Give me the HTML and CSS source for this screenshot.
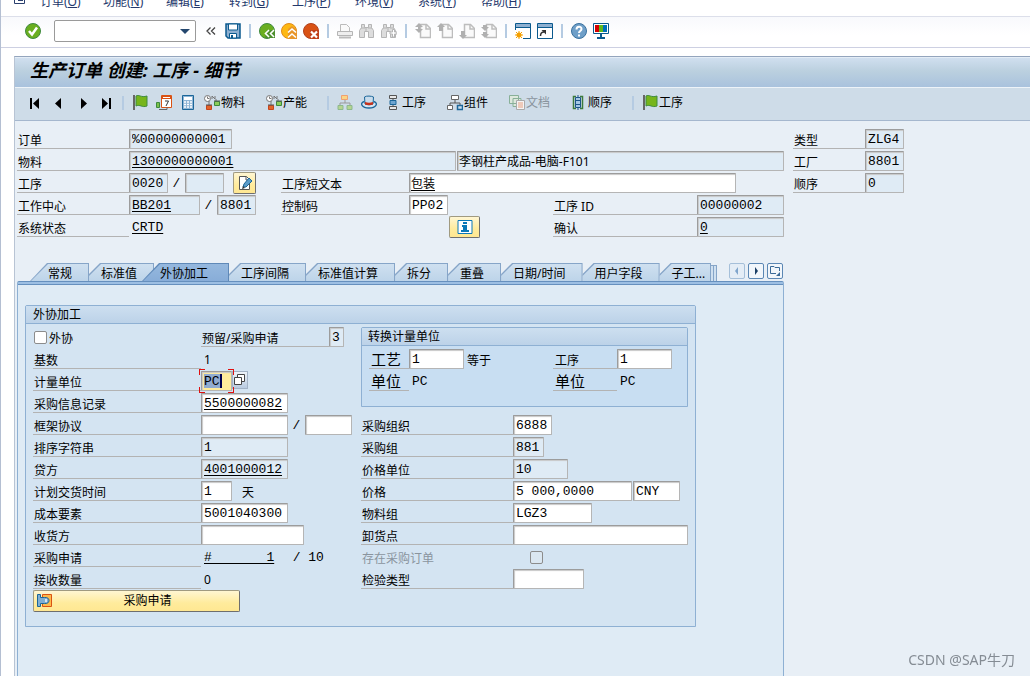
FILE: index.html
```
<!DOCTYPE html>
<html lang="zh-CN">
    <head>
        <meta charset="UTF-8" />
        <meta name="viewport" content="width=device-width, initial-scale=1.0" />
        <title>生产订单 创建: 工序 - 细节</title>
        <link rel="stylesheet" href="styles.css">
    </head>
    <body>
        <svg class="sprite" aria-hidden="true">
            <symbol id="i-flag" viewBox="0 0 16 16">
                <path d="M1 0h2v15H1z" fill="#666" />
                <path d="M4 1c3-2 5 2 11 0v10c-5 2-7-2-11 0z" fill="#76b51b" stroke="#3f8a3f" />
            </symbol>
            <symbol id="i-clock-net" viewBox="0 0 16 16">
                <circle cx="3.500" cy="3.500" r="3" fill="#fff" stroke="#777" />
                <path d="M3.500 1.500v2h2M8 4V1l3 3V1M5 6v4M12 4v3" fill="none" stroke="#777" />
                <path d="M2.500 10.500h5v4h-5z" fill="#e0642a" stroke="#c8431a" />
                <path d="M10.500 6.500h5v4h-5z" fill="#8ccc5a" stroke="#3c8a3c" />
                <path d="M2 10h6M10 6h6" stroke="#555" />
            </symbol>
            <symbol id="i-page" viewBox="0 0 16 16">
                <path d="M5.500 1.500h6l4 4v9h-10z" fill="#fafafa" stroke="#bdbdbd" stroke-width="1.500" />
                <path d="M11 1v5h5" fill="none" stroke="#bdbdbd" stroke-width="1.500" />
            </symbol>
            <symbol id="i-glass" viewBox="0 0 16 16">
                <path d="M2.500 1.500h3v3h4v-3h3v3l2 3v7h-5v-6h-4v6h-5v-7l2-3z" fill="#ddd" stroke="#b5b5b5" />
                <path d="M2 5h4M9 5h4M7 5v4" stroke="#b5b5b5" />
            </symbol>
        </svg>

        <ul class="menubar">
            <li class="menu-icon">
                <svg width="14" height="12" viewBox="0 0 14 12"><path d="M1.500 0v8.500h10V5M5 5.500h5" fill="none" stroke="#2a3f6e" /></svg>
            </li>
            <li><a href="#">订单(<u>O</u>)</a></li>
            <li><a href="#">功能(<u>N</u>)</a></li>
            <li><a href="#">编辑(<u>E</u>)</a></li>
            <li><a href="#">转到(<u>G</u>)</a></li>
            <li><a href="#">工序(<u>P</u>)</a></li>
            <li><a href="#">环境(<u>V</u>)</a></li>
            <li><a href="#">系统(<u>Y</u>)</a></li>
            <li><a href="#">帮助(<u>H</u>)</a></li>
        </ul>

        <div class="toolbar">
            <button class="tool" title="Enter">
                <svg viewBox="0 0 16 16"><circle cx="8" cy="8" r="7.500" fill="#6aae20" stroke="#3f8a3f" /><path d="M4 8l3 3.500L12 4.500" fill="none" stroke="#fff" stroke-width="2.500" /></svg>
            </button>
            <div class="command">
                <select aria-label="命令"><option></option></select>
            </div>
            <button class="tool narrow" title="收起">
                <svg viewBox="0 0 10 16"><path d="M4.500 4.500L1 8l3.500 3.500M9 4.500L5.500 8 9 11.500" fill="none" stroke="#444" stroke-width="1.300" /></svg>
            </button>
            <button class="tool" title="保存">
                <svg viewBox="0 0 16 16"><path d="M1 1h14v14H3l-2-2z" fill="#8fb0d0" stroke="#0b5a8e" stroke-width="1.500" /><path d="M3.500 1h9v6h-9z" fill="#fff" stroke="#0b5a8e" /><path d="M4.500 10.500h7V15h-7z" fill="#fff" stroke="#0b5a8e" /><path d="M6 12h2v3H6z" fill="#0b5a8e" /></svg>
            </button>
            <span class="sep"></span>
            <button class="tool" title="返回">
                <svg viewBox="0 0 16 16"><circle cx="8" cy="8" r="7.500" fill="#6aae20" stroke="#3f8a3f" /><path d="M8 7h8v8H6z" fill="#4d8f2e" /><path d="M10 7l-3.500 3.500L10 14M15 7l-3.500 3.500L15 14" fill="none" stroke="#fff" stroke-width="1.600" /></svg>
            </button>
            <button class="tool" title="退出">
                <svg viewBox="0 0 16 16"><circle cx="8" cy="8" r="7.500" fill="#fdb813" stroke="#e08a1a" /><path d="M7 6l4-3 5 4v9H7z" fill="#e8962a" /><path d="M7 9.500L11 6l4 3.500M7 14.500L11 11l4 3.500" fill="none" stroke="#fff" stroke-width="1.600" /></svg>
            </button>
            <button class="tool" title="取消">
                <svg viewBox="0 0 16 16"><circle cx="8" cy="8" r="7.500" fill="#d95214" stroke="#b0401c" /><path d="M7 7h9v9H7z" fill="#c0401a" /><path d="M8 8.500l6 6M14 8.500l-6 6" stroke="#fff" stroke-width="2.200" /></svg>
            </button>
            <span class="sep"></span>
            <button class="tool" title="打印" disabled>
                <svg viewBox="0 0 16 16"><path d="M3.500 8V1.500h6l3 3V8" fill="#fafafa" stroke="#bbb" /><path d="M.5 8.500h15v4H.5z" fill="#eee" stroke="#b5b5b5" /><path d="M2 14.500h12" stroke="#bbb" stroke-width="2" /></svg>
            </button>
            <button class="tool" title="查找" disabled><svg><use href="#i-glass" /></svg></button>
            <button class="tool" title="继续查找" disabled>
                <svg viewBox="0 0 16 16"><use href="#i-glass" /><path d="M9 9h2.500V6.500h2V9H16v2h-2.500v3h-2v-3H9z" fill="#fff" stroke="#b5b5b5" /></svg>
            </button>
            <span class="sep"></span>
            <button class="tool" title="首页" disabled>
                <svg viewBox="0 0 16 16"><use href="#i-page" /><path d="M4 0l4 4H5v2h3l-4 4-4-4h3V4H0z" fill="#b0b0b0" /></svg>
            </button>
            <button class="tool" title="上一页" disabled>
                <svg viewBox="0 0 16 16"><use href="#i-page" /><path d="M4 0l4 4H6v4H2V4H0z" fill="#b0b0b0" /></svg>
            </button>
            <button class="tool" title="下一页" disabled>
                <svg viewBox="0 0 16 16"><use href="#i-page" /><path d="M4 16l4-4H6V8H2v4H0z" fill="#b0b0b0" /></svg>
            </button>
            <button class="tool" title="末页" disabled>
                <svg viewBox="0 0 16 16"><use href="#i-page" /><path d="M2 2h4v2h2L4 8 0 4h2zM2 9h4v2h2l-4 4-4-4h2z" fill="#b0b0b0" /></svg>
            </button>
            <span class="sep"></span>
            <button class="tool" title="新建会话">
                <svg viewBox="0 0 16 16"><path d="M.5.5h15v15H.5z" fill="#fff" stroke="#0b5a8e" /><path d="M1 1h14v3H1z" fill="#8fb0d0" /><path d="M1 4.500h14" stroke="#0b5a8e" /><path d="M0 7h8v9H0z" fill="#fff" /><circle cx="4" cy="12" r="2.500" fill="#f5a000" /><path d="M4 8v8M0 12h8M1 9l6 6M7 9l-6 6" stroke="#f5a000" /></svg>
            </button>
            <button class="tool" title="创建快捷方式">
                <svg viewBox="0 0 16 16"><path d="M.5.5h15v15H.5z" fill="#fff" stroke="#0b5a8e" /><path d="M1 1h14v3H1z" fill="#8fb0d0" /><path d="M1 4.500h14" stroke="#0b5a8e" /><path d="M3.500 13c0-3 1-4 3.500-4" fill="none" stroke="#333" stroke-width="1.500" /><path d="M4.500 7H9v4.500z" fill="#333" /></svg>
            </button>
            <span class="sep"></span>
            <button class="tool" title="帮助">
                <svg viewBox="0 0 16 16"><circle cx="8" cy="8" r="7.500" fill="#6f9fc8" stroke="#3a719f" /><path d="M5.500 6.500C5.500 3 10.500 3 10.500 6c0 2-2.500 2-2.500 4M8 11.500v2" fill="none" stroke="#fff" stroke-width="2" /></svg>
            </button>
            <button class="tool" title="定制本地布局">
                <svg viewBox="0 0 16 16"><path d="M.5.5h15v10H.5z" fill="#fff" stroke="#0b5a8e" /><path d="M2 2h4v7H2z" fill="#d40000" /><path d="M6 2h4v7H6z" fill="#5fb81e" /><path d="M10 2h4v7h-4z" fill="#0070b8" /><path d="M7 11h2v3h3v2H4v-2h3z" fill="#0b5a8e" /></svg>
            </button>
        </div>

        <main class="screen">
            <h1 class="title">生产订单 创建: 工序 - 细节</h1>

            <div class="app-toolbar">
                <button class="app-btn" title="第一个"><svg viewBox="0 0 16 16"><path d="M4 3v11" stroke="#000" stroke-width="2" /><path d="M12 3v11L6 8.500z" /></svg></button>
                <button class="app-btn" title="上一个"><svg viewBox="0 0 16 16"><path d="M10 3v11L4 8.500z" /></svg></button>
                <button class="app-btn" title="下一个"><svg viewBox="0 0 16 16"><path d="M6 3v11l6-5.500z" /></svg></button>
                <button class="app-btn" title="最后一个"><svg viewBox="0 0 16 16"><path d="M3 3v11l6-5.500z" /><path d="M11 3v11" stroke="#000" stroke-width="2" /></svg></button>
                <span class="sep"></span>
                <button class="app-btn" title="下达"><svg><use href="#i-flag" /></svg></button>
                <button class="app-btn" title="计划">
                    <svg viewBox="0 0 16 16"><path d="M5.500.5h10v12h-10z" fill="#fff" stroke="#d95214" /><path d="M5 1h11v3H5z" fill="#d95214" /><path d="M7 2h7v1H7z" fill="#fff" /><path d="M9 6h3.500L10 11" fill="none" stroke="#333" /><path d="M.5 7.500h3v5h-3z" fill="#7cc04a" stroke="#3c8a3c" /><path d="M3 14.500h8V12" fill="none" stroke="#666" /></svg>
                </button>
                <button class="app-btn" title="成本">
                    <svg viewBox="0 0 16 16"><path d="M2.500.5h11v14h-11z" fill="#8fb5d5" stroke="#1b6699" /><path d="M4 2h8v3H4z" fill="#fff" /><path d="M4 7h8M4 9.500h8M4 12h8" stroke="#fff" stroke-dasharray="2 1" stroke-width="1.500" /></svg>
                </button>
                <button class="app-btn text"><svg><use href="#i-clock-net" /></svg>物料</button>
                <button class="app-btn text"><svg><use href="#i-clock-net" /></svg>产能</button>
                <span class="sep"></span>
                <button class="app-btn" title="层次" disabled>
                    <svg viewBox="0 0 16 16"><path d="M8 5v3M3 10V8h10v2" fill="none" stroke="#999" /><path d="M4.500.5h6v4h-6z" fill="#fbd585" stroke="#f0a070" /><path d="M1 10.500h5v4H1zM10 10.500h5v4h-5z" fill="#b5d590" stroke="#8cb88c" /></svg>
                </button>
                <button class="app-btn" title="抬头">
                    <svg viewBox="0 0 16 16"><path d="M3.500 6.500C-2 8 1 13 8 13s10-5 4.500-6.500" fill="#d5e5f2" stroke="#1b6699" stroke-width="1.300" /><path d="M4 9l-.5-7c2-1.500 7-1 9 0L12 9c-3 1-5 1-8 0z" fill="#c8dcec" stroke="#1b6699" /><path d="M4 7c3 1 5 1 8 0v2.500c-3 1-5 1-8 0z" fill="#c8321a" /></svg>
                </button>
                <button class="app-btn text">
                    <svg viewBox="0 0 16 16"><path d="M4.500.5h7v3h-7zM4.500 11.500h7v3h-7z" fill="#e8e8e8" stroke="#555" /><path d="M8 4v8" stroke="#555" /><path d="M5 5.500h6v4H5z" fill="#6fa5d0" stroke="#1b6699" /></svg>工序
                </button>
                <button class="app-btn text">
                    <svg viewBox="0 0 16 16"><path d="M8 5v3M3 10V8h10v2" fill="none" stroke="#555" /><path d="M4.500.5h7v4h-7zM.5 10.500h5v4h-5z" fill="#fff" stroke="#666" /><path d="M10.500 10.500h5v4h-5z" fill="#c8dcec" stroke="#1b6699" stroke-width="1.500" /></svg>组件
                </button>
                <button class="app-btn text" disabled>
                    <svg viewBox="0 0 16 16"><path d="M.5.5h9v8h-9zM4 3.500h8v8H4z" fill="#dde8dd" stroke="#88b098" /><path d="M7.500 5.500h8v9h-8z" fill="#f4f4f4" stroke="#aaa" /><path d="M9 8h5M9 10h5M9 12h5" stroke="#e8a080" /></svg>文档
                </button>
                <button class="app-btn text">
                    <svg viewBox="0 0 16 16"><path d="M5 1.500H2.500v12H5M9 1.500h2.500v12H9" fill="none" stroke="#3c7a3c" stroke-width="1.500" /><path d="M4.500 2.500h5v10h-5z" fill="#a5c8e5" stroke="#1b5588" /><path d="M4 5.500h6M4 9.500h6M7 0v2M7 13v2" stroke="#1b5588" /></svg>顺序
                </button>
                <span class="sep"></span>
                <button class="app-btn text"><svg><use href="#i-flag" /></svg>工序</button>
            </div>

            <div class="content">
                <div class="order-head">
                    <div class="head-main">
                        <label for="order">订单</label>
                        <div class="cell wide"><input class="c12" id="order" value="%00000000001" readonly /></div>

                        <label for="material">物料</label>
                        <div class="cell wide tight">
                            <input class="c40 linked" id="material" value="1300000000001" readonly />
                            <input class="c40 cjk" aria-label="物料描述" value="李钢柱产成品-电脑-F101" readonly />
                        </div>

                        <label for="operation">工序</label>
                        <div class="cell">
                            <input class="c4" id="operation" value="0020" readonly />
                            <span class="slash">/</span>
                            <input class="c4" aria-label="子工序" readonly />
                            <button class="yellow edit" title="长文本">
                                <svg viewBox="0 0 16 16"><path d="M2.500 1.500h7l3 3v10h-10z" fill="#fff" stroke="#555" /><path d="M9 2v3h4" fill="none" stroke="#555" /><path d="M6 12l1-3 5-6 3 3-6 6z" fill="#5b9bc8" stroke="#1b6699" /><path d="M5 14l1-3 2 2z" fill="#333" /></svg>
                            </button>
                        </div>
                        <label for="short-text">工序短文本</label>
                        <div class="cell rest"><input class="c40 cjk linked" id="short-text" value="包装" /></div>

                        <label for="work-center">工作中心</label>
                        <div class="cell">
                            <input class="c8 linked" id="work-center" value="BB201" readonly />
                            <span class="slash">/</span>
                            <input class="c4" aria-label="工厂" value="8801" readonly />
                        </div>
                        <label for="control-key">控制码</label>
                        <div class="cell"><input class="c4" id="control-key" value="PP02" /></div>
                        <label for="operation-id">工序 ID</label>
                        <div class="cell"><input class="c10" id="operation-id" value="00000002" readonly /></div>

                        <span class="label">系统状态</span>
                        <div class="cell status"><a class="output" href="#">CRTD</a></div>
                        <div class="cell info-cell">
                            <button class="yellow info" title="状态">
                                <svg viewBox="0 0 16 16"><path d="M1 1.500h14v13H1z" fill="#fff" stroke="#0b78b8" /><path d="M6 3h4v2H6zM5 6h5v5h2v2H4v-2h2V8H5z" fill="#0b78b8" /></svg>
                            </button>
                        </div>
                        <label for="confirmation">确认</label>
                        <div class="cell"><input class="c10 linked" id="confirmation" value="0" readonly /></div>
                    </div>

                    <div class="head-side">
                        <label for="order-type">类型</label>
                        <input class="c4" id="order-type" value="ZLG4" readonly />
                        <label for="plant">工厂</label>
                        <input class="c4" id="plant" value="8801" readonly />
                        <label for="sequence">顺序</label>
                        <input class="c4" id="sequence" value="0" readonly />
                    </div>
                </div>

                <div class="tabstrip">
                    <div class="tabs" role="tablist">
                        <button class="tab" role="tab">常规</button>
                        <button class="tab" role="tab">标准值</button>
                        <button class="tab active" role="tab" aria-selected="true">外协加工</button>
                        <button class="tab" role="tab">工序间隔</button>
                        <button class="tab" role="tab">标准值计算</button>
                        <button class="tab" role="tab">拆分</button>
                        <button class="tab" role="tab">重叠</button>
                        <button class="tab" role="tab">日期/时间</button>
                        <button class="tab" role="tab">用户字段</button>
                        <button class="tab last" role="tab">子工...</button>
                        <span class="tab-edge"></span>
                        <span class="tab-edge"></span>
                    </div>
                    <div class="tab-nav">
                        <button title="左" disabled><svg viewBox="0 0 14 14"><path d="M8 3v8L5 7z" fill="#7fa5cc" /></svg></button>
                        <button title="右"><svg viewBox="0 0 14 14"><path d="M6 3v8l3-4z" fill="#1b3f66" /></svg></button>
                        <button title="列表"><svg viewBox="0 0 14 14"><path d="M11.500 7V3.500H7L6 2.500H2.500v7H8" fill="none" stroke="#3a6a98" /><path d="M8 12h4V8z" fill="#3a6a98" /></svg></button>
                    </div>
                </div>

                <div class="panel">
                    <fieldset class="group">
                        <div class="group-title">外协加工</div>
                        <div class="group-body">
                            <div class="col-left">
                                <div class="row">
                                    <div class="check"><input type="checkbox" id="external" /><label for="external">外协</label></div>
                                    <label class="l16" for="reservation">预留/采购申请</label>
                                    <input class="c1" id="reservation" value="3" readonly />
                                </div>
                                <div class="row"><span class="label l21">基数</span><span class="output sans">1</span></div>
                                <div class="row">
                                    <label class="l21" for="unit">计量单位</label>
                                    <span class="focus-frame"><input class="c3 selected" id="unit" value="PC" /></span>
                                    <button class="match" title="搜索帮助">
                                        <svg viewBox="0 0 14 14"><path d="M4.500 1.500h7v7h-7z" fill="#fff" stroke="#444" /><path d="M1.500 4.500h7v7h-7z" fill="#fff" stroke="#444" /></svg>
                                    </button>
                                </div>
                                <div class="row"><label class="l21" for="info-record">采购信息记录</label><input class="c10 linked" id="info-record" value="5500000082" /></div>
                                <div class="row">
                                    <label class="l21" for="agreement">框架协议</label><input class="c10" id="agreement" />
                                    <span class="slash">/</span>
                                    <input class="c5" aria-label="协议项目" />
                                </div>
                                <div class="row"><label class="l21" for="sort">排序字符串</label><input class="c10" id="sort" value="1" readonly /></div>
                                <div class="row"><label class="l21" for="vendor">贷方</label><input class="c10 linked" id="vendor" value="4001000012" readonly /></div>
                                <div class="row"><label class="l21" for="delivery">计划交货时间</label><input class="c3" id="delivery" value="1" /><span class="unit">天</span></div>
                                <div class="row"><label class="l21" for="cost">成本要素</label><input class="c10" id="cost" value="5001040300" /></div>
                                <div class="row"><label class="l21" for="recipient">收货方</label><input class="c12" id="recipient" /></div>
                                <div class="row">
                                    <span class="label l21">采购申请</span>
                                    <a class="output" href="#">#       1</a>
                                    <span class="slash req">/</span>
                                    <span class="output">10</span>
                                </div>
                                <div class="row"><span class="label l21">接收数量</span><span class="output sans">0</span></div>
                                <button class="yellow requisition">
                                    <svg viewBox="0 0 16 16"><path d="M5.500 1.500h9v12h-9z" fill="#fdb94a" stroke="#d95214" /><path d="M.500 1.500h3v3h4c6-1 6 7 0 6h-4v3h-3z" fill="#7faed2" stroke="#1b6699" /><path d="M8 6h2v3H8z" fill="#d5e5f2" /></svg>
                                    <span>采购申请</span>
                                </button>
                            </div>

                            <div class="col-right">
                                <fieldset class="group inner">
                                    <div class="group-title">转换计量单位</div>
                                    <div class="convert">
                                        <label class="big" for="routing">工艺</label><input class="c6" id="routing" value="1" /><span class="equals">等于</span>
                                        <label for="op-qty">工序</label><input class="c6" id="op-qty" value="1" />
                                        <span class="label big">单位</span><span class="output">PC</span><span></span>
                                        <span class="label big">单位</span><span class="output">PC</span>
                                    </div>
                                </fieldset>
                                <div class="row"><label class="l19" for="org">采购组织</label><input class="c4" id="org" value="6888" /></div>
                                <div class="row"><label class="l19" for="purch-group">采购组</label><input class="c3" id="purch-group" value="881" readonly /></div>
                                <div class="row"><label class="l19" for="price-unit">价格单位</label><input class="c6" id="price-unit" value="10" readonly /></div>
                                <div class="row tight">
                                    <label class="l19" for="price">价格</label><input class="c14" id="price" value="5 000,0000" />
                                    <input class="c5" aria-label="货币" value="CNY" />
                                </div>
                                <div class="row"><label class="l19" for="mat-group">物料组</label><input class="c9" id="mat-group" value="LGZ3" /></div>
                                <div class="row"><label class="l19" for="unload">卸货点</label><input class="c21" id="unload" /></div>
                                <div class="row"><label class="l19 off" for="po-exists">存在采购订单</label><input type="checkbox" id="po-exists" disabled /></div>
                                <div class="row"><label class="l19" for="inspection">检验类型</label><input class="c8" id="inspection" /></div>
                            </div>
                        </div>
                    </fieldset>
                </div>
            </div>
        </main>

        <div class="watermark">CSDN @SAP牛刀</div>
    </body>
</html>
```
FILE: styles.css
```
* {
    margin: 0;
    padding: 0;
    box-sizing: border-box;
}

body {
    display: flex;
    flex-direction: column;
    min-height: 100vh;
    border-left: 1px solid #b4bfd2;
    background-color: white;
    font-family: "Noto Sans", "Noto Sans CJK SC", sans-serif;
    font-size: 12px;
    line-height: 18px;
    color: black;
}

button {
    font: inherit;
    color: inherit;
    border: 0;
    background: none;
    cursor: pointer;
}

svg {
    display: block;
    flex: none;
}

.sprite {
    position: absolute;
    width: 0;
    height: 0;
}

/* menu bar, scrolled half out of view */
.menubar {
    display: flex;
    align-items: flex-end;
    height: 17px;
    padding: 0 0 5px 12px;
    overflow: hidden;
    list-style: none;
    border-bottom: 1px solid #dcdfea;
}

.menubar li {
    min-width: 63px;
}

.menubar .menu-icon {
    min-width: 27px;
    padding-bottom: 4px;
}

.menubar a {
    color: #24386b;
    text-decoration: none;
}

.toolbar {
    display: flex;
    align-items: center;
    gap: 6px;
    height: 31px;
    padding: 0 0 2px 24px;
    background: linear-gradient(#f8f9fc, white 60%);
    border-bottom: 1px solid #cdd0e2;
}

.tool svg {
    width: 16px;
    height: 16px;
}

.tool.narrow svg {
    width: 10px;
}

.tool.narrow {
    margin: 0 3px 0 4px;
}

.sep {
    width: 2px;
    height: 14px;
    margin: 0 2px;
    background-color: #b5cbe2;
}

.command {
    position: relative;
    width: 142px;
    margin-left: 7px;
}

.command select {
    display: block;
    width: 100%;
    height: 22px;
    appearance: none;
    border: 1px solid #9a9a9a;
    border-radius: 2px;
    background-color: white;
}

.command::after {
    content: "";
    position: absolute;
    top: 9px;
    right: 6px;
    border: 5px solid transparent;
    border-top-color: #24476e;
    border-bottom: 0;
    pointer-events: none;
}

.screen {
    flex: 1;
    display: flex;
    flex-direction: column;
    margin: 8px 0 0 13px;
    border-top: 1px solid #94a5bd;
    border-left: 1px solid #b8c4d4;
    background-color: #e8eff6;
}

.title {
    height: 31px;
    padding-left: 15px;
    border-top: 1px solid #e4edf6;
    border-bottom: 1px solid #edf3f8;
    background: linear-gradient(#d0dfef, #bbd0df 45%, #a9c2dd);
    font-size: 18px;
    line-height: 25px;
    font-style: italic;
    font-weight: bold;
}

.app-toolbar {
    display: flex;
    align-items: center;
    height: 33px;
    padding: 0 0 2px 8px;
    background-color: #cedce8;
    border-bottom: 1px solid #a5b7ce;
}

.app-toolbar .sep {
    margin: 0 4px 0 3px;
}

.app-btn {
    display: flex;
    align-items: center;
    gap: 1px;
    height: 20px;
    padding: 0 4px;
}

.app-btn svg {
    width: 16px;
    height: 16px;
}

.app-btn.text {
    min-width: 62px;
    line-height: 22px;
}

.app-btn:disabled {
    color: #8a949e;
}

.content {
    flex: 1;
    display: flex;
    flex-direction: column;
    padding: 8px 0 0 2px;
}

/* fields: widths count 8px characters plus the frame */
input {
    height: 20px;
    padding: 0 2px;
    border: 1px solid #9c9c9c;
    border-right-color: #b5b5b5;
    border-bottom-color: #b5b5b5;
    border-radius: 1px;
    outline: none;
    background-color: white;
    box-shadow: inset 1px 1px 1px #c8c8c8;
    font-family: "Liberation Mono", "Noto Sans CJK SC", monospace;
    font-size: 13px;
    color: black;
}

input[readonly] {
    background-color: #dfebf5;
}

input.cjk {
    padding: 0 1px;
    font-family: "Noto Sans", "Noto Sans CJK SC", sans-serif;
    font-size: 12px;
}

.linked {
    text-decoration: underline;
    text-underline-offset: 2px;
}

.c1 { width: 15px; }
.c3 { width: 31px; }
.c4 { width: 39px; }
.c5 { width: 47px; }
.c6 { width: 55px; }
.c8 { width: 71px; }
.c9 { width: 79px; }
.c10 { width: 87px; }
.c12 { width: 103px; }
.c14 { width: 119px; }
.c21 { width: 175px; }
.c40 { width: 327px; }

label,
.label {
    height: 20px;
    padding-left: 1px;
    border-bottom: 1px solid #b3b3b3;
    line-height: 24px;
    white-space: nowrap;
}

.l16 { width: 128px; }
.l19 { width: 152px; }
.l21 { width: 168px; }

.output {
    height: 20px;
    padding-left: 3px;
    font-family: "Liberation Mono", monospace;
    font-size: 13px;
    line-height: 22px;
    white-space: pre;
    color: black;
    text-underline-offset: 2px;
}

.output.sans {
    font-family: "Noto Sans", sans-serif;
    font-size: 12px;
}

.slash {
    width: 17px;
    text-align: center;
    font-family: "Liberation Mono", monospace;
    font-size: 13px;
    line-height: 22px;
}

.order-head {
    display: flex;
    gap: 9px;
}

.head-main {
    display: grid;
    grid-template-columns: 112px 152px 128px 144px 144px 87px;
    grid-auto-rows: 22px;
}

.head-side {
    display: grid;
    grid-template-columns: 72px 39px;
    grid-auto-rows: 22px;
    align-content: start;
}

.cell {
    display: flex;
    align-items: flex-start;
}

.cell.wide {
    grid-column: 2 / -1;
}

.cell.rest {
    grid-column: 4 / -1;
}

.cell.tight {
    gap: 1px;
}

.cell.status {
    grid-column: 2 / 4;
}

.info-cell {
    padding-left: 40px;
}

.yellow {
    display: flex;
    align-items: center;
    justify-content: center;
    height: 22px;
    margin-top: -1px;
    border: 1px solid #6e6e6e;
    border-top-color: #a09a80;
    border-left-color: #a09a80;
    border-radius: 2px;
    background: linear-gradient(#fff6d2, #ffeb9c 60%, #ffe792);
}

.edit {
    width: 23px;
    margin-left: 9px;
}

.info {
    width: 31px;
}

.yellow svg {
    width: 16px;
    height: 16px;
}

.tabstrip {
    display: flex;
    justify-content: space-between;
    width: 767px;
    margin-top: 24px;
    padding: 0 1px 0 13px;
}

.tabs {
    display: flex;
}

/* outline is the background colour left around the inner fill */
.tab {
    position: relative;
    z-index: 0;
    height: 18px;
    margin-left: -6px;
    padding: 3px 17px 0 18px;
    line-height: 16px;
    white-space: nowrap;
    background-color: #86a5c8;
    clip-path: polygon(17px 0, 100% 0, 100% 100%, 6px 100%, 6px 11px);
}

.tab::before {
    content: "";
    position: absolute;
    z-index: -1;
    inset: 1px 1px 0 1px;
    background: linear-gradient(#cfe0f0, #bdd4e9);
    clip-path: polygon(17px 0, 100% 0, 100% 100%, 0 100%);
}

.tab:first-child {
    margin-left: 0;
    clip-path: polygon(17px 0, 100% 0, 100% 100%, 0 100%);
}

.tab.active {
    z-index: 1;
    margin-left: -12px;
    padding-right: 21px;
    background-color: #5f89b8;
    clip-path: polygon(17px 0, 100% 0, 100% 100%, 0 100%);
}

.tab.active::before {
    background: linear-gradient(#95b8de, #88add8);
}

.tab.last {
    padding-right: 6px;
}

.tab-edge {
    width: 3px;
    height: 16px;
    margin-top: 2px;
    border: 1px solid #86a5c8;
    border-width: 1px 1px 0 0;
    background-color: #cfe0f0;
}

.tab-nav {
    display: flex;
    gap: 3px;
}

.tab-nav button {
    width: 16px;
    height: 16px;
    border: 1px solid #5b87b4;
    border-radius: 2px;
    background-color: #f1f6fb;
}

.tab-nav button:disabled {
    border-color: #a5bfd9;
    background-color: #e4edf6;
}

.tab-nav svg {
    width: 14px;
    height: 14px;
}

.panel {
    flex: 1;
    width: 767px;
    padding: 23px 7px 49px;
    border: 1px solid #8eb0d3;
    border-top-color: #6690be;
    border-bottom: 0;
    border-radius: 2px 2px 0 0;
    background: linear-gradient(#9dbfe3 2px, #6690be 2px, #6690be 3px, #dfebf5 3px);
}

.group {
    width: 671px;
    min-width: 0;
    border: 1px solid #8eb0d3;
    border-radius: 2px 2px 0 0;
    background-color: #d4e4f2;
}

.group-title {
    height: 18px;
    padding-left: 7px;
    border-bottom: 1px solid #8eb0d3;
    background: linear-gradient(#cddff0, #bcd2e8);
}

.group-body {
    display: flex;
    padding: 3px 7px 14px;
}

.col-left {
    width: 328px;
}

.row {
    display: flex;
    align-items: flex-start;
    height: 22px;
}

.row.tight {
    gap: 1px;
}

.row.tight label {
    margin-right: -1px;
}

.check {
    display: flex;
    width: 168px;
}

.check label {
    border: 0;
}

input[type="checkbox"] {
    appearance: none;
    width: 13px;
    height: 13px;
    margin: 4px 1px 0;
    padding: 0;
    border-color: #8c8c8c;
    border-radius: 2px;
    box-shadow: none;
}

input[type="checkbox"]:disabled {
    margin-left: 17px;
    background-color: #dbe7f1;
}

.focus-frame {
    position: relative;
    display: flex;
}

/* red corner marks around the focused field */
.focus-frame::after {
    content: "";
    position: absolute;
    inset: -2px;
    background:
        linear-gradient(#e01010, #e01010) 0 0 / 6px 1px,
        linear-gradient(#e01010, #e01010) 0 0 / 1px 6px,
        linear-gradient(#e01010, #e01010) 100% 0 / 6px 1px,
        linear-gradient(#e01010, #e01010) 100% 0 / 1px 6px,
        linear-gradient(#e01010, #e01010) 0 100% / 6px 1px,
        linear-gradient(#e01010, #e01010) 0 100% / 1px 6px,
        linear-gradient(#e01010, #e01010) 100% 100% / 6px 1px,
        linear-gradient(#e01010, #e01010) 100% 100% / 1px 6px;
    background-repeat: no-repeat;
    pointer-events: none;
}

.selected {
    background:
        linear-gradient(#000050, #000050) 18px 2px / 2px 14px no-repeat,
        linear-gradient(#90abd0, #90abd0) 2px 2px / 16px 14px no-repeat,
        #ffec9c;
}

.match {
    width: 16px;
    height: 18px;
    border: 1px solid #a3b3c6;
    background: linear-gradient(#eef3f8, #b9cbe0);
}

.match svg {
    width: 14px;
    height: 14px;
}

.unit {
    padding-left: 10px;
    line-height: 24px;
}

.slash.req {
    margin-left: 14px;
}

.requisition {
    width: 207px;
    justify-content: flex-start;
    padding-left: 3px;
}

.requisition span {
    flex: 1;
    padding-left: 3px;
    line-height: 22px;
}

.group.inner {
    width: 327px;
    height: 80px;
    margin-bottom: 8px;
    background-color: #c8def2;
}

.inner .group-title {
    padding-left: 6px;
}

.convert {
    display: grid;
    grid-template-columns: 40px 55px 89px 64px 55px;
    grid-auto-rows: 22px;
    padding: 3px 7px 0;
}

.convert label,
.convert .label {
    padding-left: 2px;
}

.convert .big {
    font-size: 15px;
    line-height: 20px;
}

.equals {
    padding-left: 3px;
    line-height: 24px;
}

label.off {
    border: 0;
    color: #8a949e;
}

.watermark {
    position: fixed;
    right: 15px;
    bottom: 6px;
    font-size: 14px;
    line-height: 20px;
    color: #858c94;
}
```
